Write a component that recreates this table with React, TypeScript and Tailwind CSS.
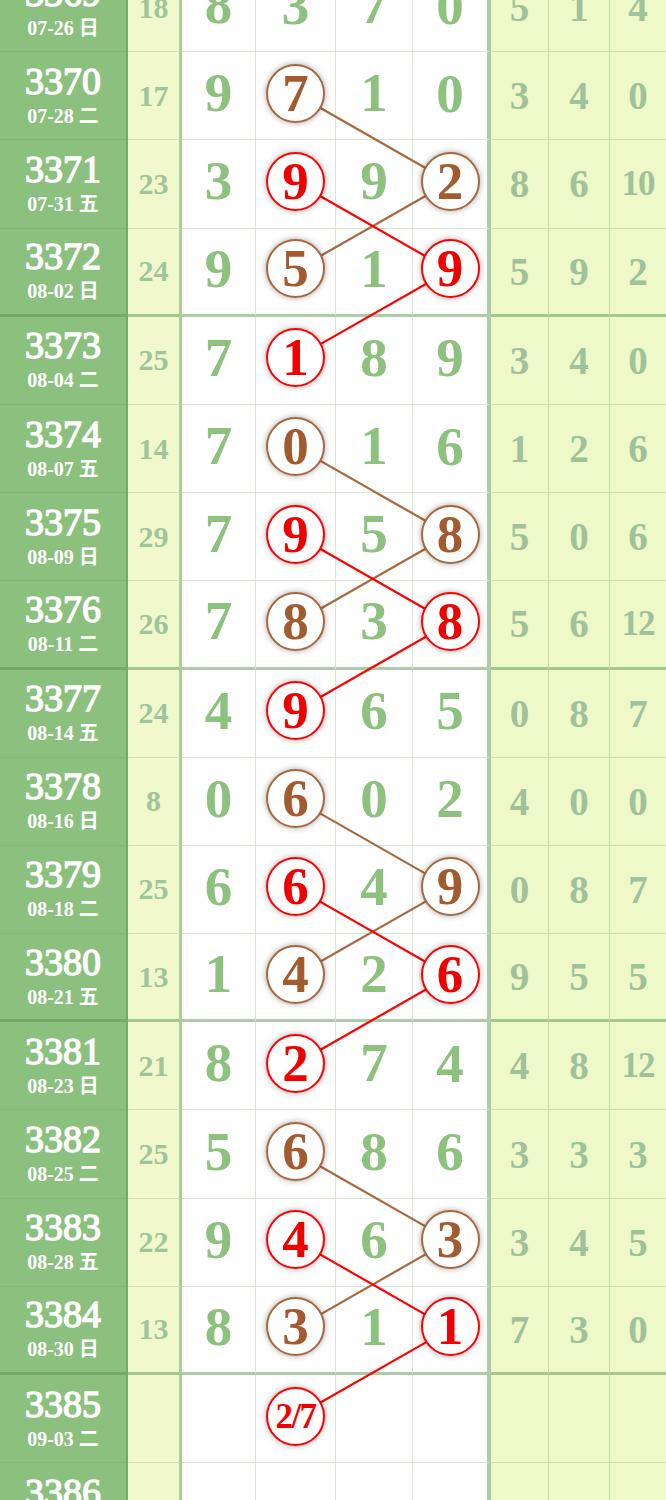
import React from "react";

type RowData = { n: string; d: string; s: string; v: string[]; r: string[] };

const rows: RowData[] = [
  { n: "3369", d: "07-26 日", s: "18", v: ["8", "3", "7", "0"], r: ["5", "1", "4"] },
  { n: "3370", d: "07-28 二", s: "17", v: ["9", "7", "1", "0"], r: ["3", "4", "0"] },
  { n: "3371", d: "07-31 五", s: "23", v: ["3", "9", "9", "2"], r: ["8", "6", "10"] },
  { n: "3372", d: "08-02 日", s: "24", v: ["9", "5", "1", "9"], r: ["5", "9", "2"] },
  { n: "3373", d: "08-04 二", s: "25", v: ["7", "1", "8", "9"], r: ["3", "4", "0"] },
  { n: "3374", d: "08-07 五", s: "14", v: ["7", "0", "1", "6"], r: ["1", "2", "6"] },
  { n: "3375", d: "08-09 日", s: "29", v: ["7", "9", "5", "8"], r: ["5", "0", "6"] },
  { n: "3376", d: "08-11 二", s: "26", v: ["7", "8", "3", "8"], r: ["5", "6", "12"] },
  { n: "3377", d: "08-14 五", s: "24", v: ["4", "9", "6", "5"], r: ["0", "8", "7"] },
  { n: "3378", d: "08-16 日", s: "8", v: ["0", "6", "0", "2"], r: ["4", "0", "0"] },
  { n: "3379", d: "08-18 二", s: "25", v: ["6", "6", "4", "9"], r: ["0", "8", "7"] },
  { n: "3380", d: "08-21 五", s: "13", v: ["1", "4", "2", "6"], r: ["9", "5", "5"] },
  { n: "3381", d: "08-23 日", s: "21", v: ["8", "2", "7", "4"], r: ["4", "8", "12"] },
  { n: "3382", d: "08-25 二", s: "25", v: ["5", "6", "8", "6"], r: ["3", "3", "3"] },
  { n: "3383", d: "08-28 五", s: "22", v: ["9", "4", "6", "3"], r: ["3", "4", "5"] },
  { n: "3384", d: "08-30 日", s: "13", v: ["8", "3", "1", "1"], r: ["7", "3", "0"] },
  { n: "3385", d: "09-03 二", s: "", v: ["", "2/7", "", ""], r: ["", "", ""] },
  { n: "3386", d: "09-06 五", s: "", v: ["", "", "", ""], r: ["", "", ""] },
];

type Mark = "brown" | "red" | null;

function marksFor(i: number): [Mark, Mark] {
  if (i < 1) return [null, null];
  if (i > 16) return [null, null];
  const g = (i - 1) % 4;
  if (g === 0) return ["brown", null];
  if (g === 1) return ["red", "brown"];
  if (g === 2) return ["brown", "red"];
  return ["red", null];
}

const ROW_H = 88.2;
const XB = 295.5;
const XD = 450;
const cy = (i: number) => i * ROW_H + ROW_H / 2 - 2.5;

function Circle({ text, kind }: { text: string; kind: "brown" | "red" }) {
  const small = text.length > 1;
  return (
    <div
      className={
        "relative z-[2] w-[59px] h-[59px] rounded-full bg-white border-[2.5px] flex items-center justify-center font-bold leading-none shadow-[0_0_6px_rgba(0,0,0,0.35)] " +
        (kind === "brown" ? "border-[#a8683f] text-[#a35a2e] " : "border-[#ff0000] text-[#f00000] ") +
        (small ? "text-[35px] tracking-[-1.5px]" : "text-[53px]")
      }
    >
      {text}
    </div>
  );
}

function Row({ r, i }: { r: RowData; i: number }) {
  const thick = i === 3 || i === 7 || i === 11 || i === 15;
  const bb = thick ? "border-b-[3px] border-b-[#5a9a5080]" : "border-b border-b-[#64a05a40]";
  const [mb, md] = marksFor(i);
  const big = "text-[55px] font-bold text-[#8cc17e] leading-none";
  const cell = "flex items-center justify-center " + bb;
  const right = "text-[#9fc29a] font-bold leading-none";
  return (
    <div className="grid grid-cols-[128px_54px_74px_80px_77px_78px_58px_61px_56px] h-[88.2px]">
      <div className={cell + " bg-[#8cc07f] border-r-2 border-r-[#4f8f4266] flex-col text-white"}>
        <div className="h-[40px] flex items-center text-[38px] font-normal leading-none [-webkit-text-stroke:1.4px_#ffffff]">{r.n}</div>
        <div className="h-[30px] flex items-center text-[20px] font-bold leading-none">{r.d}</div>
      </div>
      <div className={cell + " bg-[#f0f8cc] border-r-[3px] border-r-[#5a9a5073]"}>
        <span className="text-[30px] font-bold text-[#a0c49b] leading-none">{r.s}</span>
      </div>
      <div className={cell + " bg-white border-r border-r-[#64a05a40] pb-[6px]"}>
        <span className={big}>{r.v[0]}</span>
      </div>
      <div className={cell + " bg-white border-r border-r-[#64a05a40] pb-[5px]"}>
        {mb ? <Circle text={r.v[1]} kind={mb} /> : <span className={big}>{r.v[1]}</span>}
      </div>
      <div className={cell + " bg-white border-r border-r-[#64a05a40] pb-[6px]"}>
        <span className={big}>{r.v[2]}</span>
      </div>
      <div className={cell + " bg-white border-r-4 border-r-[#5a9a5080] pb-[5px]"}>
        {md ? <Circle text={r.v[3]} kind={md} /> : <span className={big}>{r.v[3]}</span>}
      </div>
      {r.r.map((x, k) => (
        <div
          key={k}
          className={cell + " bg-[#eef8c9] " + (k < 2 ? "border-r border-r-[#64a05a4d]" : "")}
        >
          <span className={right + (x.length > 1 ? " text-[35px] tracking-[-1px]" : " text-[39px]")}>{x}</span>
        </div>
      ))}
    </div>
  );
}

export default function App() {
  const segs: { x1: number; y1: number; x2: number; y2: number; c: string }[] = [];
  for (const i0 of [1, 5, 9, 13]) {
    const brown = "#a8683f";
    const red = "#ff0000";
    segs.push({ x1: XB, y1: cy(i0), x2: XD, y2: cy(i0 + 1), c: brown });
    segs.push({ x1: XD, y1: cy(i0 + 1), x2: XB, y2: cy(i0 + 2), c: brown });
    segs.push({ x1: XB, y1: cy(i0 + 1), x2: XD, y2: cy(i0 + 2), c: red });
    segs.push({ x1: XD, y1: cy(i0 + 2), x2: XB, y2: cy(i0 + 3), c: red });
  }
  const H = rows.length * ROW_H;
  return (
    <div className="w-[666px] h-[1500px] overflow-hidden bg-white font-['Liberation_Serif','Noto_Sans_CJK_SC',serif]">
      <div className="relative -mt-[36px]">
        {rows.map((r, i) => (
          <Row key={r.n} r={r} i={i} />
        ))}
        <svg
          className="absolute left-0 top-0 z-[1] pointer-events-none"
          width={666}
          height={H}
          viewBox={`0 0 666 ${H}`}
        >
          {segs.map((s, k) => (
            <line key={k} x1={s.x1} y1={s.y1} x2={s.x2} y2={s.y2} stroke={s.c} strokeWidth={2.2} />
          ))}
        </svg>
      </div>
    </div>
  );
}
